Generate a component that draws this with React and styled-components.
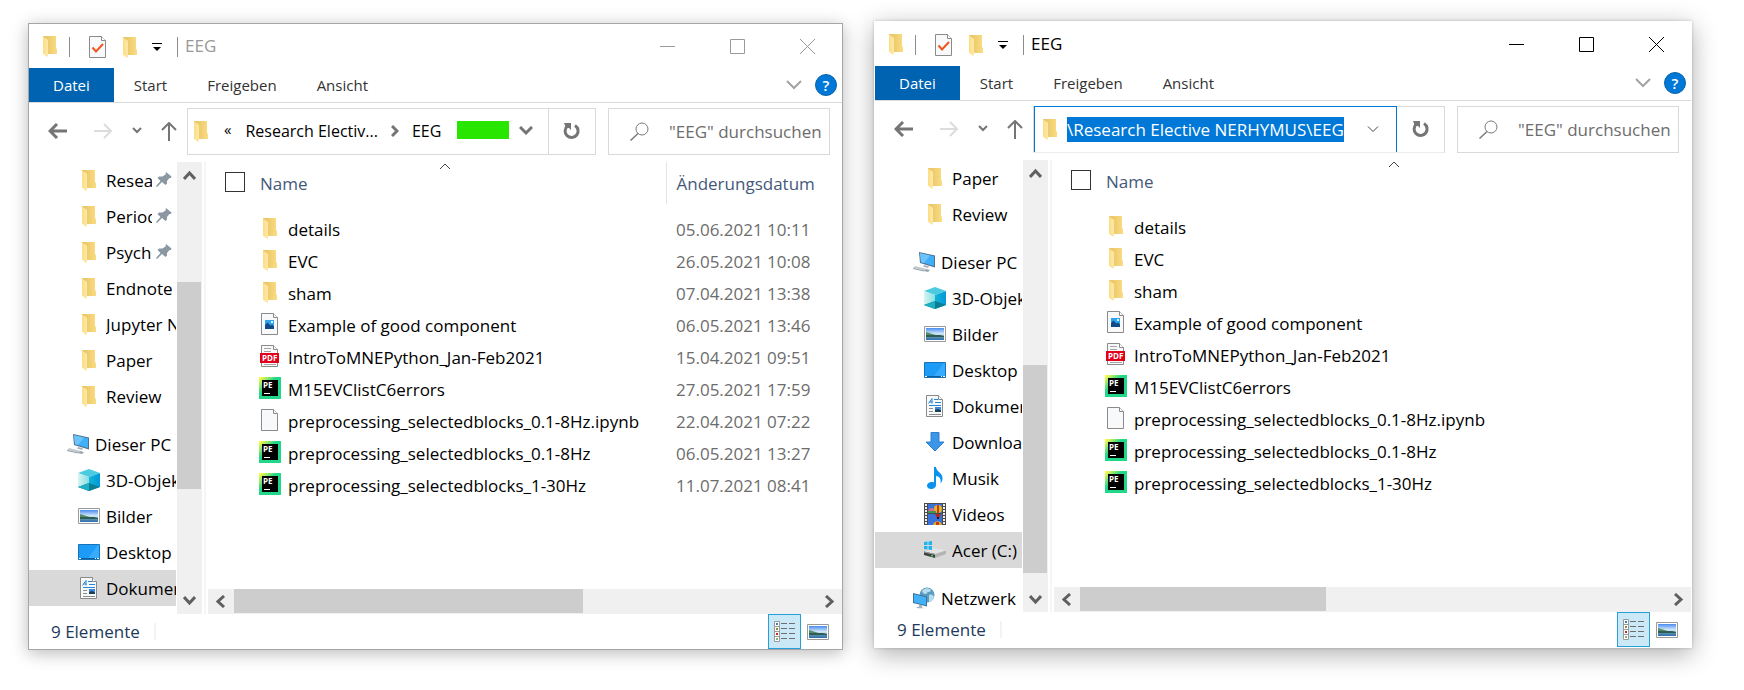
import React from "react";
import styled, { createGlobalStyle } from "styled-components";

const GlobalStyle = createGlobalStyle`
  *, *::before, *::after { box-sizing: border-box; }
  body {
    margin: 0;
    background: #fff;
    color: #000;
    font: 17px/24px "Open Sans", "Noto Sans", sans-serif;
  }
  button, input { font: inherit; color: inherit; }
  svg { display: block; flex: none; }
`;

/* ---------- page and window frame ---------- */

const Desktop = styled.main`
  display: flex;
  gap: 31px;
  padding: 21px 52px 42px 28px;
  min-height: 100vh;
  overflow: hidden;
`;

const Frame = styled.section`
  display: flex;
  flex-direction: column;
  flex: ${(p) => (p.$active ? "818 1 0" : "815 1 0")};
  min-width: 0;
  height: calc(100vh - 63px);
  min-height: 420px;
  margin-top: ${(p) => (p.$active ? "0" : "2px")};
  background: #fff;
  border: 1px solid ${(p) => (p.$active ? "#fff" : "#a6a6a6")};
  box-shadow: ${(p) =>
    p.$active
      ? "0 6px 24px rgba(0, 0, 0, 0.32), 0 0 3px rgba(0, 0, 0, 0.2)"
      : "0 3px 16px rgba(0, 0, 0, 0.28)"};
`;

const TitleBar = styled.header`
  display: flex;
  align-items: center;
  flex: none;
  height: 44px;
  padding-left: 14px;
`;

const TitleRule = styled.span`
  width: 1px;
  height: 20px;
  margin: 2px ${(p) => p.$after} 0 ${(p) => p.$before};
  background: #8c8c8c;
`;

const QuickButton = styled.button`
  display: flex;
  margin: 2px 15px 0 0;
  padding: 0;
  border: 0;
  background: none;
`;

const Title = styled.h1`
  flex: 1;
  margin: 0;
  font-size: 17px;
  font-weight: 400;
  color: ${(p) => (p.$active ? "#000" : "#999")};
`;

const CaptionButton = styled.button`
  display: flex;
  align-items: center;
  justify-content: center;
  width: 70px;
  height: 44px;
  padding: 0;
  border: 0;
  background: none;
  color: ${(p) => (p.$active ? "#000" : "#999")};
`;

/* ---------- ribbon ---------- */

const Ribbon = styled.nav`
  display: flex;
  align-items: center;
  flex: none;
  height: 35px;
  padding-right: 5px;
  border-bottom: 1px solid #dadada;
`;

const RibbonTab = styled.button`
  height: 34px;
  padding: 0 ${(p) => (p.$file ? "24px" : "20px")};
  border: 0;
  background: ${(p) => (p.$file ? "#0063b1" : "none")};
  color: ${(p) => (p.$file ? "#fff" : "#333")};
  font-size: 15px;
`;

const RibbonTools = styled.div`
  display: flex;
  align-items: center;
  gap: 13px;
  margin-left: auto;
`;

const IconButton = styled.button`
  display: flex;
  align-items: center;
  justify-content: center;
  flex: none;
  padding: 0;
  border: 0;
  background: none;
`;

const HelpButton = styled.button`
  width: 22px;
  height: 22px;
  padding: 0;
  border: 1px solid #0a62ab;
  border-radius: 50%;
  background: #0078d7;
  color: #fff;
  font-size: 15px;
  font-weight: 600;
  line-height: 18px;
`;

/* ---------- address row ---------- */

const AddressRow = styled.div`
  display: flex;
  align-items: center;
  flex: none;
  height: 59px;
  padding: 0 12px 3px 19px;
`;

const History = styled.div`
  display: flex;
  align-items: center;
  gap: 19px;
  flex: none;
  margin-right: 10px;
`;

const BackButton = styled(IconButton)`
  margin-right: 8px;
`;

const AddressBox = styled.div`
  display: flex;
  flex: 1;
  min-width: 0;
  height: 47px;
  border: 1px solid #d9d9d9;
  ${(p) => p.$editing && "border-bottom-color: #ececec;"}
`;

const AddressField = styled.div`
  display: flex;
  align-items: center;
  flex: 1;
  min-width: 0;
  padding-left: ${(p) => (p.$editing ? "8px" : "6px")};
  ${(p) =>
    p.$editing &&
    `
    margin-top: -1px;
    border: solid #0078d7;
    border-width: 1px 1px 0 1px;
  `}
`;

const Crumb = styled.a`
  color: #000;
  font-size: 16px;
  text-decoration: none;
  white-space: nowrap;
`;

const CrumbMore = styled.span`
  margin: 0 14px 4px 16px;
  font-size: 15px;
`;

const CrumbGap = styled.span`
  padding: 0 13px;
`;

const Marker = styled.span`
  flex: none;
  width: 52px;
  height: 18px;
  margin: 0 1px 3px auto;
  background: #28e600;
`;

const AddressInput = styled.input`
  flex: none;
  field-sizing: content;
  height: 25px;
  margin-left: 10px;
  padding: 0;
  border: 0;
  outline: 0;
  background: #0078d7;
  color: #fff;
`;

const DropButton = styled(IconButton)`
  width: ${(p) => (p.$wide ? "46px" : "32px")};
  margin-left: ${(p) => (p.$wide ? "auto" : "0")};
  margin-right: ${(p) => (p.$wide ? "0" : "6px")};
`;

const RefreshButton = styled(IconButton)`
  width: 47px;
  border-left: ${(p) => (p.$divider ? "1px solid #d9d9d9" : "0")};
`;

const SearchBox = styled.label`
  display: flex;
  align-items: center;
  flex: none;
  gap: 20px;
  width: 222px;
  height: 47px;
  margin-left: 12px;
  padding-left: 21px;
  border: 1px solid #d9d9d9;
`;

const SearchInput = styled.input.attrs({ type: "text" })`
  flex: 1;
  min-width: 0;
  padding: 2px 0 0;
  border: 0;
  outline: 0;
  background: none;
  &::placeholder { color: #6d6d6d; opacity: 1; }
`;

/* ---------- panes ---------- */

const Panes = styled.div`
  display: flex;
  flex: 1;
  min-height: 0;
`;

const Tree = styled.ul`
  flex: none;
  width: 147px;
  margin: 0 1px 0 0;
  padding: 0;
  overflow: hidden;
  list-style: none;
`;

const TreeItem = styled.li`
  display: flex;
  align-items: center;
  gap: 6px;
  height: 36px;
  margin-top: ${(p) => (p.$root ? "12px" : "0")};
  padding-left: ${(p) => (p.$root ? "37px" : "48px")};
  background: ${(p) => (p.$selected ? "#d9d9d9" : "none")};
`;

const TreeIcon = styled.span`
  display: flex;
  justify-content: center;
  flex: none;
  width: 23px;
`;

const TreeLabel = styled.a`
  flex: 1;
  min-width: 0;
  padding-top: 1px;
  overflow: hidden;
  color: #000;
  text-decoration: none;
  white-space: nowrap;
`;

const PinSlot = styled.span`
  flex: none;
  margin: 0 4px 2px -2px;
`;

const ScrollBar = styled.div`
  display: flex;
  flex: none;
  flex-direction: ${(p) => (p.$horizontal ? "row" : "column")};
  ${(p) => (p.$horizontal ? "height: 25px;" : "width: 25px;")}
  background: #f0f0f0;
`;

const ScrollButton = styled.button`
  display: flex;
  align-items: center;
  justify-content: center;
  flex: 0 0 26px;
  padding: 0;
  border: 0;
  background: none;
  color: #606060;
`;

const ScrollSpace = styled.span`
  flex: ${(p) => p.$size} 1 0;
`;

const ScrollThumb = styled.span`
  flex: ${(p) => p.$size} 1 0;
  margin: ${(p) => (p.$horizontal ? "0 0 1px 0" : "0 1px 0 0")};
  background: #cdcdcd;
`;

const Splitter = styled.span`
  flex: none;
  width: 2px;
  margin: 0 2px;
  background: #f5f5f5;
`;

const Content = styled.div`
  display: flex;
  flex-direction: column;
  flex: 1;
  min-width: 0;
`;

const FileArea = styled.div`
  flex: 1;
  min-height: 0;
  padding-left: 17px;
  overflow: hidden;
`;

const FileTable = styled.table`
  width: max-content;
  border-collapse: collapse;
  table-layout: fixed;
`;

const NameHeader = styled.th`
  position: relative;
  width: ${(p) => p.$width}px;
  height: 42px;
  padding: 0;
  color: #44597a;
  font-weight: 400;
  text-align: left;
`;

const HeaderInner = styled.label`
  display: flex;
  align-items: center;
  gap: 15px;
  padding-top: 1px;
`;

const SortMark = styled.span`
  position: absolute;
  top: 1px;
  left: 50%;
  margin-left: -6px;
`;

const DateHeader = styled.th`
  width: 175px;
  height: 42px;
  padding: 1px 0 0 10px;
  border-left: 1px solid #e5e5e5;
  color: #44597a;
  font-weight: 400;
  text-align: left;
`;

const SelectAll = styled.input.attrs({ type: "checkbox" })`
  appearance: none;
  width: 20px;
  height: 20px;
  margin: 0 0 4px;
  border: 1px solid #333;
  background: #fff;
`;

const FileBody = styled.tbody`
  &::before {
    content: "";
    display: block;
    height: 10px;
  }
`;

const NameCell = styled.td`
  height: 32px;
  padding: 0;
`;

const FileName = styled.div`
  display: flex;
  align-items: center;
  gap: 7px;
  height: 32px;
  padding-left: 34px;
  white-space: nowrap;
`;

const FileIcon = styled.span`
  display: flex;
  justify-content: center;
  flex: none;
  width: 22px;
  margin-bottom: 4px;
`;

const DateCell = styled.td`
  padding: 0 0 0 10px;
  color: #6d6d6d;
  white-space: nowrap;
`;

/* ---------- status bar ---------- */

const StatusBar = styled.footer`
  display: flex;
  align-items: center;
  flex: none;
  height: 35px;
  padding: 0 13px 0 22px;
  color: #1e395b;
`;

const StatusRule = styled.span`
  width: 2px;
  height: 17px;
  margin-left: 14px;
  background: #f3f3f3;
`;

const ViewButton = styled.button`
  display: flex;
  align-items: center;
  justify-content: center;
  height: 35px;
  width: ${(p) => (p.$pressed ? "33px" : "34px")};
  padding: 0;
  border: ${(p) => (p.$pressed ? "1px solid #26a0da" : "0")};
  background: ${(p) => (p.$pressed ? "#cbe8f6" : "none")};
`;

const ViewSwitch = styled.div`
  display: flex;
  margin: 0 -6px 0 auto;
`;

/* ---------- icons ---------- */

const FolderIcon = () => (
  <svg width="14" height="21" viewBox="0 0 14 21">
    <defs>
      <linearGradient id="folderBack" x1="0" x2="1">
        <stop offset="0.2" stopColor="#e9c768" />
        <stop offset="1" stopColor="#fbdc83" />
      </linearGradient>
      <linearGradient id="folderFront" x1="0" x2="1">
        <stop offset="0" stopColor="#fbdd85" />
        <stop offset="1" stopColor="#ffe9a8" />
      </linearGradient>
    </defs>
    <path d="M0 0h13v12l1 1v5H3z" fill="url(#folderBack)" />
    <path d="M0 0.500L4.500 3.500Q5 4 5 5v14.500L4 21 0 17.500z" fill="url(#folderFront)" />
  </svg>
);

const Sheet = ({ children }) => (
  <svg width="20" height="22" viewBox="0 0 20 22">
    <path d="M1.500 .5h12L17.500 4.500v17h-16z" fill="#f8f9fa" stroke="#8a8a8a" />
    <path d="M13.500 .5v4h4" fill="#fff" stroke="#8a8a8a" />
    {children}
  </svg>
);

const BlankIcon = () => <Sheet />;

const CheckSheetIcon = () => (
  <Sheet>
    <path d="M4.500 11.500l3.500 4 7-7.500" fill="none" stroke="#f0561d" strokeWidth="2" />
  </Sheet>
);

const ImageFileIcon = () => (
  <Sheet>
    <path d="M5 7h9v9H5z" fill="#2fa4ea" />
    <path d="M11 8h2v2h-2z" fill="#dff2fc" />
    <path d="M5 12l2.500-2.500 3 3 1.500-1 2 2V16H5z" fill="#134a86" />
  </Sheet>
);

const PdfText = styled.text`
  font: 700 8px "Open Sans", sans-serif;
  fill: #fff;
`;

const PdfIcon = () => (
  <Sheet>
    <path d="M4 3.500h7M4 6.500h7M4 19.500h12" stroke="#a5a5a5" />
    <path d="M0 8h19v10H0z" fill="#e2001a" />
    <PdfText x="2" y="16">PDF</PdfText>
  </Sheet>
);

const PythonIcon = () => (
  <svg width="22" height="22" viewBox="0 0 22 22">
    <defs>
      <linearGradient id="peGlow" x1="0" y1="0" x2="1" y2="1">
        <stop offset="0.05" stopColor="#fcf84a" />
        <stop offset="0.4" stopColor="#21d789" />
        <stop offset="1" stopColor="#21d789" />
      </linearGradient>
    </defs>
    <path d="M0 0h22v22H0z" fill="url(#peGlow)" />
    <path d="M3 3h16v16H3z" fill="#000" />
    <PdfText x="4" y="11">PE</PdfText>
    <path d="M5 16h6v1H5z" fill="#fff" />
  </svg>
);

const PinIcon = () => (
  <svg width="16" height="15" viewBox="0 0 16 15">
    <path
      d="M10 0l5.500 4.500-.5 1.500h-1.500L11 9v2.500L9.500 13 6 10l-5 5-1-1 4.500-5L1.500 6 3 4.500h3.500L9.500 2.500z"
      fill="#8b98a3"
    />
  </svg>
);

const PcIcon = () => (
  <svg width="22" height="22" viewBox="0 0 22 22">
    <path d="M6 1l16 3.500v12L7 12z" fill="#4f6f8c" />
    <path d="M7 2.200l14 3V15L8 11.200z" fill="#3fb0f8" />
    <path d="M7 2.200l10 2.200-6 7.700-3-.9z" fill="#6cc4fb" />
    <path d="M11 14l5 1.200-1 1.800-5-1.500z" fill="#a8b2bc" />
    <path d="M2 15l11 2.800-1.500 1.700L0 17z" fill="#c3cad1" />
    <path d="M0 17l11.500 2.500-.5 1-11-2.500zM13 18l4 1-2 2-4-1z" fill="#98a3ad" />
  </svg>
);

const CubeIcon = () => (
  <svg width="22" height="22" viewBox="0 0 22 22">
    <defs>
      <linearGradient id="cubeLeft" x1="0" x2="1">
        <stop offset="0" stopColor="#d6f5f3" />
        <stop offset="1" stopColor="#86dfe4" />
      </linearGradient>
      <linearGradient id="cubeRight" x1="0" x2="1">
        <stop offset="0" stopColor="#12b6d6" />
        <stop offset="1" stopColor="#0496da" />
      </linearGradient>
    </defs>
    <path d="M0 4l11-4 11 4-11 4z" fill="#4bcbe0" />
    <path d="M0 4l11 4v14L0 18z" fill="url(#cubeLeft)" />
    <path d="M22 4L11 8v14l11-4z" fill="url(#cubeRight)" />
    <path d="M0 18l11-4 11 4-11 4z" fill="#0b7f95" />
    <path d="M0 18l11-4v8z" fill="#1cb0c2" />
  </svg>
);

const PictureIcon = () => (
  <svg width="22" height="16" viewBox="0 0 22 16">
    <defs>
      <linearGradient id="sky" x1="0" y1="0" x2="0" y2="1">
        <stop offset="0" stopColor="#4a8cf0" />
        <stop offset="0.5" stopColor="#d8ecfa" />
        <stop offset="0.75" stopColor="#5b92a8" />
        <stop offset="1" stopColor="#2f6db5" />
      </linearGradient>
    </defs>
    <path d="M.5.500h21v15H.5z" fill="#fff" stroke="#9a9a9a" />
    <path d="M2 2h18v12H2z" fill="url(#sky)" />
    <path d="M2 6c5 1 8 3 13 4H2z" fill="#5a8c6a" />
    <path d="M2 9h14l4 1v1H2z" fill="#2d5d54" />
  </svg>
);

const DesktopIcon = () => (
  <svg width="22" height="16" viewBox="0 0 22 16">
    <path d="M.5.500h21v15H.5z" fill="#1c9cf6" stroke="#1673b5" />
    <path d="M10 14L20 1h1v13z" fill="#37acff" />
    <path d="M1 14h20v1H1z" fill="#0b5fa0" />
    <path d="M1 14h2v1H1zM17 14h1v1h-1zM19 14h2v1h-2z" fill="#fff" />
  </svg>
);

const DocumentsIcon = () => (
  <Sheet>
    <path d="M3.500 8.500L7 3.500v5M4.500 7h3" fill="none" stroke="#2486d8" />
    <path d="M9 4.500h4M10 7.500h6M4 10.500h12" stroke="#2486d8" />
    <path d="M4 13.500h4M4 16.500h4M4 19.500h12" stroke="#8d8d8d" />
    <path d="M10 12h6v5h-6z" fill="#3b86d6" />
    <path d="M10 15l3-1 3 1.500V17h-6z" fill="#1b3f55" />
  </Sheet>
);

const DownloadIcon = () => (
  <svg width="20" height="20" viewBox="0 0 20 20">
    <path d="M6 .5h8V10h5l-9 9-9-9h5z" fill="#3b96e8" stroke="#2d80cb" />
  </svg>
);

const MusicIcon = () => (
  <svg width="16" height="22" viewBox="0 0 16 22">
    <path d="M7 0h2c.5 5 7 6 6.500 11.500 0 2-1 4-2 5 .8-4-.5-7-4.500-7.500V18c0 2.500-2.500 4-5 4-2.400 0-4-1.300-4-3.200C0 16.500 2.500 15 5 15c.8 0 1.500.1 2 .4z" fill="#0a93ee" />
  </svg>
);

const VideoIcon = () => (
  <svg width="22" height="22" viewBox="0 0 22 22">
    <path d="M0 0h22v22H0z" fill="#4a4a4a" />
    <path d="M2 1v20M20 1v20" stroke="#f2f2f2" strokeWidth="2" strokeDasharray="2 1" />
    <path d="M4 1h14v9H4zM4 11h14v11H4z" fill="#3a72dc" />
    <circle cx="14" cy="6" r="4" fill="#e8b818" />
    <path d="M13 2h2v8h-2z" fill="#c8381e" />
    <path d="M4 8c2-4 5-4 7 0v2H4z" fill="#db6a8c" />
    <path d="M4 8h8v2H4z" fill="#3f9a4c" />
    <path d="M11 11h6l-2 4h-2z" fill="#b32a1c" />
    <path d="M13 14h2v2h-2z" fill="#1c1c1c" />
    <path d="M9 22c1-5 8-5 9 0z" fill="#e5a91d" />
    <path d="M12 19h3v3h-3z" fill="#c8381e" />
  </svg>
);

const DriveIcon = () => (
  <svg width="22" height="18" viewBox="0 0 22 18">
    <path d="M0 11l10-4 12 2.500L11 13z" fill="#e3e3e3" />
    <path d="M11 13l11-3.500V13l-11 4z" fill="#b4b4b4" />
    <path d="M0 10.500L11 13v4L0 14z" fill="#3f4042" />
    <path d="M0 10.500L11 13v1L0 11.500z" fill="#9c9c9c" />
    <path d="M7 14h2v1.500H7z" fill="#32d04a" />
    <path d="M0 1l3.500-.5V4H0zM4.500.400L8 0v4H4.500zM0 5h3.500v3.500L0 8zM4.500 5H8v4l-3.500-.4z" fill="#1db3ee" />
  </svg>
);

const NetworkIcon = () => (
  <svg width="22" height="22" viewBox="0 0 22 22">
    <circle cx="14" cy="8" r="7.500" fill="#5a9cc0" />
    <path d="M9 4c3-4 7-3 9-1-1 3-3 1-4 3s-4 1-5-2zM16 8c3-1 4 0 5 2-1 3-3 5-5 5z" fill="#b9dcec" />
    <path d="M0 6l14 3.500v10L0 16z" fill="#39749f" />
    <path d="M1 7.200l12 3v8L1 15.200z" fill="#42b1f7" />
    <path d="M6 17.500l3 .7v2l2 1H5l-2-1 3-.7z" fill="#a9b5be" />
  </svg>
);

const Stroke = ({ w, h, d, width = 1, color = "currentColor" }) => (
  <svg width={w} height={h} viewBox={`0 0 ${w} ${h}`}>
    <path d={d} fill="none" stroke={color} strokeWidth={width} />
  </svg>
);

const QuickMenuIcon = () => (
  <svg width="10" height="8" viewBox="0 0 10 8">
    <path d="M0 0h10v1H0zM1 4h8L5 8z" fill="#000" />
  </svg>
);

const RefreshIcon = () => (
  <svg width="18" height="18" viewBox="0 0 18 18">
    <path d="M12 3.500A6.500 6.500 0 1 1 4.500 4" fill="none" stroke="#757575" strokeWidth="3" />
    <path d="M1 1h7v7L6 6 3 6z" fill="#757575" />
  </svg>
);

const SearchIcon = () => (
  <svg width="19" height="19" viewBox="0 0 19 19">
    <circle cx="12" cy="7" r="6" fill="none" stroke="#7a7a7a" />
    <path d="M8 11.500L.5 18.500" stroke="#7a7a7a" strokeWidth="1.500" />
  </svg>
);

const DetailsIcon = () => (
  <svg width="22" height="21" viewBox="0 0 22 21">
    <path d="M.5.500h5v20h-5zM.5 5.500h5M.5 10.500h5M.5 15.500h5" fill="#fff" stroke="#9a9a9a" />
    <path d="M2 2h2v2H2z" fill="#3b82b8" />
    <path d="M2 7h2v2H2z" fill="#8a8a3a" />
    <path d="M2 12h2v2H2z" fill="#c8281e" />
    <path d="M2 17h2v2H2z" fill="#8fae7c" />
    <path d="M7 2.500h6M15 2.500h6M7 7.500h6M15 7.500h6M7 12.500h6M15 12.500h6M7 17.500h6M15 17.500h6" stroke="#6f6f6f" />
  </svg>
);

const icons = {
  folder: FolderIcon,
  image: ImageFileIcon,
  pdf: PdfIcon,
  python: PythonIcon,
  blank: BlankIcon,
  pc: PcIcon,
  cube: CubeIcon,
  picture: PictureIcon,
  desktop: DesktopIcon,
  documents: DocumentsIcon,
  download: DownloadIcon,
  music: MusicIcon,
  video: VideoIcon,
  drive: DriveIcon,
  network: NetworkIcon,
};

const Glyph = ({ name }) => {
  const Icon = icons[name];
  return <Icon />;
};

/* ---------- data ---------- */

const files = [
  { name: "details", icon: "folder", date: "05.06.2021 10:11" },
  { name: "EVC", icon: "folder", date: "26.05.2021 10:08" },
  { name: "sham", icon: "folder", date: "07.04.2021 13:38" },
  { name: "Example of good component", icon: "image", date: "06.05.2021 13:46" },
  { name: "IntroToMNEPython_Jan-Feb2021", icon: "pdf", date: "15.04.2021 09:51" },
  { name: "M15EVClistC6errors", icon: "python", date: "27.05.2021 17:59" },
  { name: "preprocessing_selectedblocks_0.1-8Hz.ipynb", icon: "blank", date: "22.04.2021 07:22" },
  { name: "preprocessing_selectedblocks_0.1-8Hz", icon: "python", date: "06.05.2021 13:27" },
  { name: "preprocessing_selectedblocks_1-30Hz", icon: "python", date: "11.07.2021 08:41" },
];

const leftTree = [
  { name: "Resea", icon: "folder", pinned: true },
  { name: "Period", icon: "folder", pinned: true },
  { name: "Psych", icon: "folder", pinned: true },
  { name: "Endnote", icon: "folder" },
  { name: "Jupyter N", icon: "folder" },
  { name: "Paper", icon: "folder" },
  { name: "Review", icon: "folder" },
  { name: "Dieser PC", icon: "pc", root: true },
  { name: "3D-Objekte", icon: "cube" },
  { name: "Bilder", icon: "picture" },
  { name: "Desktop", icon: "desktop" },
  { name: "Dokumente", icon: "documents", selected: true },
];

const rightTree = [
  { name: "Paper", icon: "folder" },
  { name: "Review", icon: "folder" },
  { name: "Dieser PC", icon: "pc", root: true },
  { name: "3D-Objekte", icon: "cube" },
  { name: "Bilder", icon: "picture" },
  { name: "Desktop", icon: "desktop" },
  { name: "Dokumente", icon: "documents" },
  { name: "Downloads", icon: "download" },
  { name: "Musik", icon: "music" },
  { name: "Videos", icon: "video" },
  { name: "Acer (C:)", icon: "drive", selected: true },
  { name: "Netzwerk", icon: "network", root: true },
];

/* ---------- explorer ---------- */

function Scroller({ horizontal, before, thumb, after }) {
  const arrows = horizontal
    ? ["M8 1L2 6.500l6 5.500", "M2 1l6 5.500L2 12"]
    : ["M1 9l5.500-6L12 9", "M1 2l5.500 6L12 2"];
  const size = horizontal ? { w: 11, h: 13 } : { w: 13, h: 11 };
  return (
    <ScrollBar $horizontal={horizontal}>
      <ScrollButton aria-label={horizontal ? "Nach links" : "Nach oben"}>
        <Stroke {...size} d={arrows[0]} width={3} />
      </ScrollButton>
      <ScrollSpace $size={before} />
      <ScrollThumb $size={thumb} $horizontal={horizontal} />
      <ScrollSpace $size={after} />
      <ScrollButton aria-label={horizontal ? "Nach rechts" : "Nach unten"}>
        <Stroke {...size} d={arrows[1]} width={3} />
      </ScrollButton>
    </ScrollBar>
  );
}

function Explorer({ active, tree, treeScroll, listScroll, nameWidth, showDates }) {
  return (
    <Frame $active={active}>
      <TitleBar>
        <FolderIcon />
        <TitleRule $before="12px" $after="18px" />
        <QuickButton aria-label="Eigenschaften"><CheckSheetIcon /></QuickButton>
        <QuickButton aria-label="Neuer Ordner"><FolderIcon /></QuickButton>
        <QuickButton aria-label="Symbolleiste anpassen"><QuickMenuIcon /></QuickButton>
        <TitleRule $before="0" $after="7px" />
        <Title $active={active}>EEG</Title>
        <CaptionButton $active={active} aria-label="Minimieren">
          <Stroke w={15} h={15} d="M0 7.500h15" />
        </CaptionButton>
        <CaptionButton $active={active} aria-label="Maximieren">
          <Stroke w={15} h={15} d="M.5.500h14v14H.5z" />
        </CaptionButton>
        <CaptionButton $active={active} aria-label="Schließen">
          <Stroke w={15} h={15} d="M0 0l15 15M15 0L0 15" />
        </CaptionButton>
      </TitleBar>

      <Ribbon>
        <RibbonTab $file>Datei</RibbonTab>
        <RibbonTab>Start</RibbonTab>
        <RibbonTab>Freigeben</RibbonTab>
        <RibbonTab>Ansicht</RibbonTab>
        <RibbonTools>
          <IconButton aria-label="Menüband erweitern">
            <Stroke w={16} h={10} d="M1 1l7 7 7-7" width={2} color="#a3a3a3" />
          </IconButton>
          <HelpButton>?</HelpButton>
        </RibbonTools>
      </Ribbon>

      <AddressRow>
        <History>
          <BackButton aria-label="Zurück">
            <Stroke w={19} h={16} d="M9 1L2 8l7 7M2 8h17" width={3} color="#757575" />
          </BackButton>
          <IconButton aria-label="Vorwärts">
            <Stroke w={19} h={16} d="M10 1l7 7-7 7M17 8H0" width={2} color="#dcdcdc" />
          </IconButton>
          <IconButton aria-label="Zuletzt besucht">
            <Stroke w={10} h={8} d="M1 1l4 4 4-4" width={2} color="#757575" />
          </IconButton>
          <IconButton aria-label="Nach oben">
            <Stroke w={16} h={19} d="M1 8l7-7 7 7M8 1v18" width={2} color="#757575" />
          </IconButton>
        </History>
        <AddressBox $editing={active}>
          <AddressField $editing={active}>
            <FolderIcon />
            {active ? (
              <>
                <AddressInput aria-label="Adresse" readOnly value={"\\Research Elective NERHYMUS\\EEG"} />
                <DropButton $wide aria-label="Vorherige Speicherorte">
                  <Stroke w={12} h={7} d="M1 .5l5 5 5-5" color="#444" />
                </DropButton>
              </>
            ) : (
              <>
                <CrumbMore>«</CrumbMore>
                <Crumb href="#research">Research Electiv...</Crumb>
                <CrumbGap>
                  <Stroke w={8} h={12} d="M1 1l5 5-5 5" width={3} color="#757575" />
                </CrumbGap>
                <Crumb href="#eeg">EEG</Crumb>
                <Marker />
                <DropButton aria-label="Vorherige Speicherorte">
                  <Stroke w={14} h={10} d="M1 1l6 6 6-6" width={3} color="#757575" />
                </DropButton>
              </>
            )}
          </AddressField>
          <RefreshButton $divider={!active} aria-label="Aktualisieren"><RefreshIcon /></RefreshButton>
        </AddressBox>
        <SearchBox>
          <SearchIcon />
          <SearchInput aria-label="Suchen" placeholder={'"EEG" durchsuchen'} />
        </SearchBox>
      </AddressRow>

      <Panes>
        <Tree>
          {tree.map((item) => (
            <TreeItem key={item.name} $root={item.root} $selected={item.selected}>
              <TreeIcon><Glyph name={item.icon} /></TreeIcon>
              <TreeLabel href="#ordner">{item.name}</TreeLabel>
              {item.pinned && <PinSlot><PinIcon /></PinSlot>}
            </TreeItem>
          ))}
        </Tree>
        <Scroller {...treeScroll} />
        <Splitter />
        <Content>
          <FileArea>
            <FileTable>
              <thead>
                <tr>
                  <NameHeader $width={nameWidth}>
                    <SortMark><Stroke w={12} h={7} d="M1 6l5-5 5 5" color="#444" /></SortMark>
                    <HeaderInner><SelectAll />Name</HeaderInner>
                  </NameHeader>
                  {showDates && <DateHeader>Änderungsdatum</DateHeader>}
                </tr>
              </thead>
              <FileBody>
                {files.map((file) => (
                  <tr key={file.name}>
                    <NameCell>
                      <FileName>
                        <FileIcon><Glyph name={file.icon} /></FileIcon>
                        {file.name}
                      </FileName>
                    </NameCell>
                    {showDates && <DateCell>{file.date}</DateCell>}
                  </tr>
                ))}
              </FileBody>
            </FileTable>
          </FileArea>
          <Scroller horizontal {...listScroll} />
        </Content>
      </Panes>

      <StatusBar>
        9 Elemente
        <StatusRule />
        <ViewSwitch>
          <ViewButton $pressed aria-label="Details"><DetailsIcon /></ViewButton>
          <ViewButton aria-label="Große Symbole"><PictureIcon /></ViewButton>
        </ViewSwitch>
      </StatusBar>
    </Frame>
  );
}

export default function App() {
  return (
    <>
      <GlobalStyle />
      <Desktop>
        <Explorer
          tree={leftTree}
          treeScroll={{ before: 94, thumb: 209, after: 99 }}
          listScroll={{ before: 0, thumb: 60, after: 40 }}
          nameWidth={441}
          showDates
        />
        <Explorer
          active
          tree={rightTree}
          treeScroll={{ before: 180, thumb: 209, after: 13 }}
          listScroll={{ before: 0, thumb: 42, after: 58 }}
          nameWidth={645}
        />
      </Desktop>
    </>
  );
}
